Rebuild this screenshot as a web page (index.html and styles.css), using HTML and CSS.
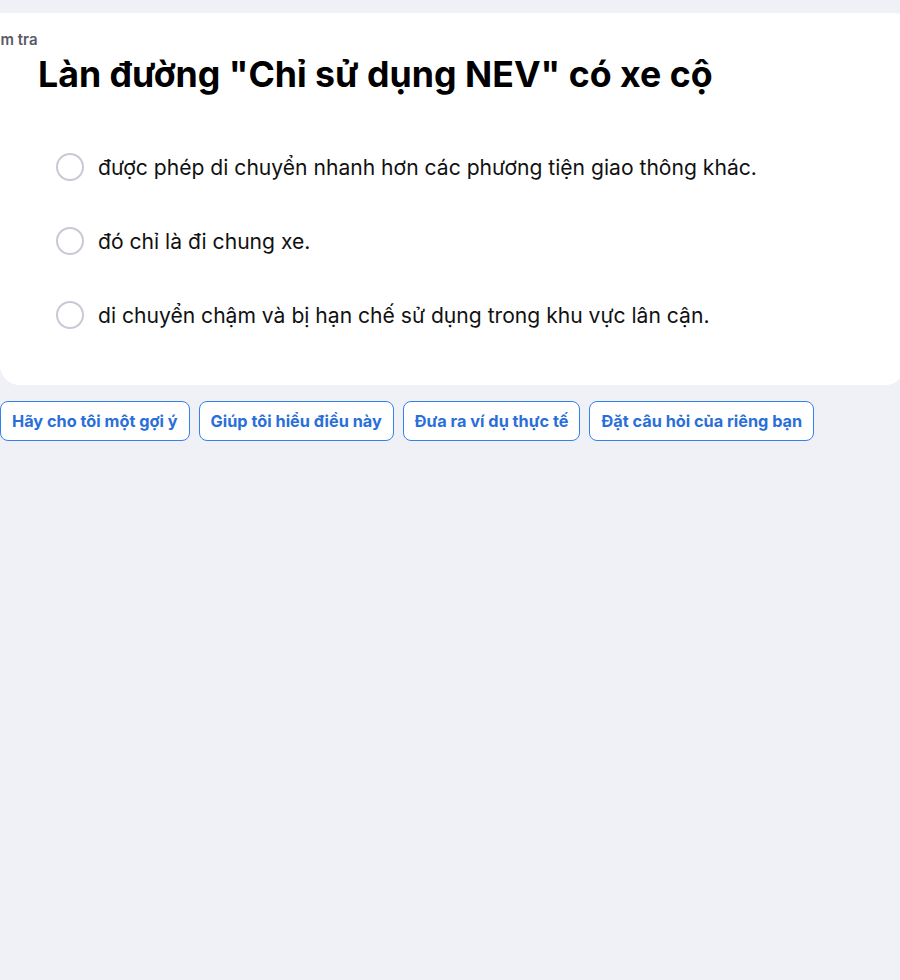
FILE: index.html
```html
<!DOCTYPE html>
<html lang="vi">
<head>
<meta charset="utf-8">
<link rel="stylesheet" href="styles.css">
</head>
<body>
<div class="page">
  <section class="card">
    <div class="eyebrow">Kiểm tra</div>
    <h1 class="title">Làn đường "Chỉ sử dụng NEV" có xe cộ</h1>
    <ul class="options">
      <li class="option"><span class="radio"></span><span class="label">được phép di chuyển nhanh hơn các phương tiện giao thông khác.</span></li>
      <li class="option"><span class="radio"></span><span class="label">đó chỉ là đi chung xe.</span></li>
      <li class="option"><span class="radio"></span><span class="label">di chuyển chậm và bị hạn chế sử dụng trong khu vực lân cận.</span></li>
    </ul>
  </section>
  <div class="chips">
    <button class="chip">Hãy cho tôi một gợi ý</button>
    <button class="chip">Giúp tôi hiểu điều này</button>
    <button class="chip">Đưa ra ví dụ thực tế</button>
    <button class="chip">Đặt câu hỏi của riêng bạn</button>
  </div>
</div>
</body>
</html>
```

FILE: styles.css
```css
html, body {
  margin: 0;
  padding: 0;
  background: #f0f1f6;
  font-family: Inter, "Noto Sans", sans-serif;
  overflow: hidden;
}
.page {
  width: 900px;
  height: 980px;
  overflow: hidden;
  padding-top: 13px;
  box-sizing: border-box;
}
.card {
  width: 905px;
  height: 372px;
  background: #ffffff;
  border-radius: 0 10px 20px 20px;
  box-sizing: border-box;
  padding-top: 18px;
  overflow: hidden;
}
.eyebrow {
  margin-left: -23px;
  font-size: 15px;
  font-weight: 600;
  color: #5a5a66;
  line-height: 18px;
}
.title {
  margin: 4px 0 0 38px;
  font-size: 35.7px;
  font-weight: 700;
  color: #000;
  line-height: 42px;
}
.options {
  list-style: none;
  margin: 58px 0 0 56px;
  padding: 0;
  display: flex;
  flex-direction: column;
  gap: 46px;
}
.option {
  display: flex;
  align-items: center;
  gap: 14px;
  height: 28px;
}
.radio {
  width: 24px;
  height: 24px;
  border: 2px solid #c9c9d6;
  border-radius: 50%;
  flex: none;
}
.label {
  font-size: 21.1px;
  color: #111;
}
.chips {
  display: flex;
  gap: 9px;
  margin-top: 16px;
}
.chip {
  height: 40px;
  padding: 0 11px;
  background: #fff;
  border: 1px solid #3182ee;
  border-radius: 8px;
  color: #2a6fd9;
  font-family: inherit;
  font-size: 16.3px;
  font-weight: 700;
  cursor: pointer;
}
```
